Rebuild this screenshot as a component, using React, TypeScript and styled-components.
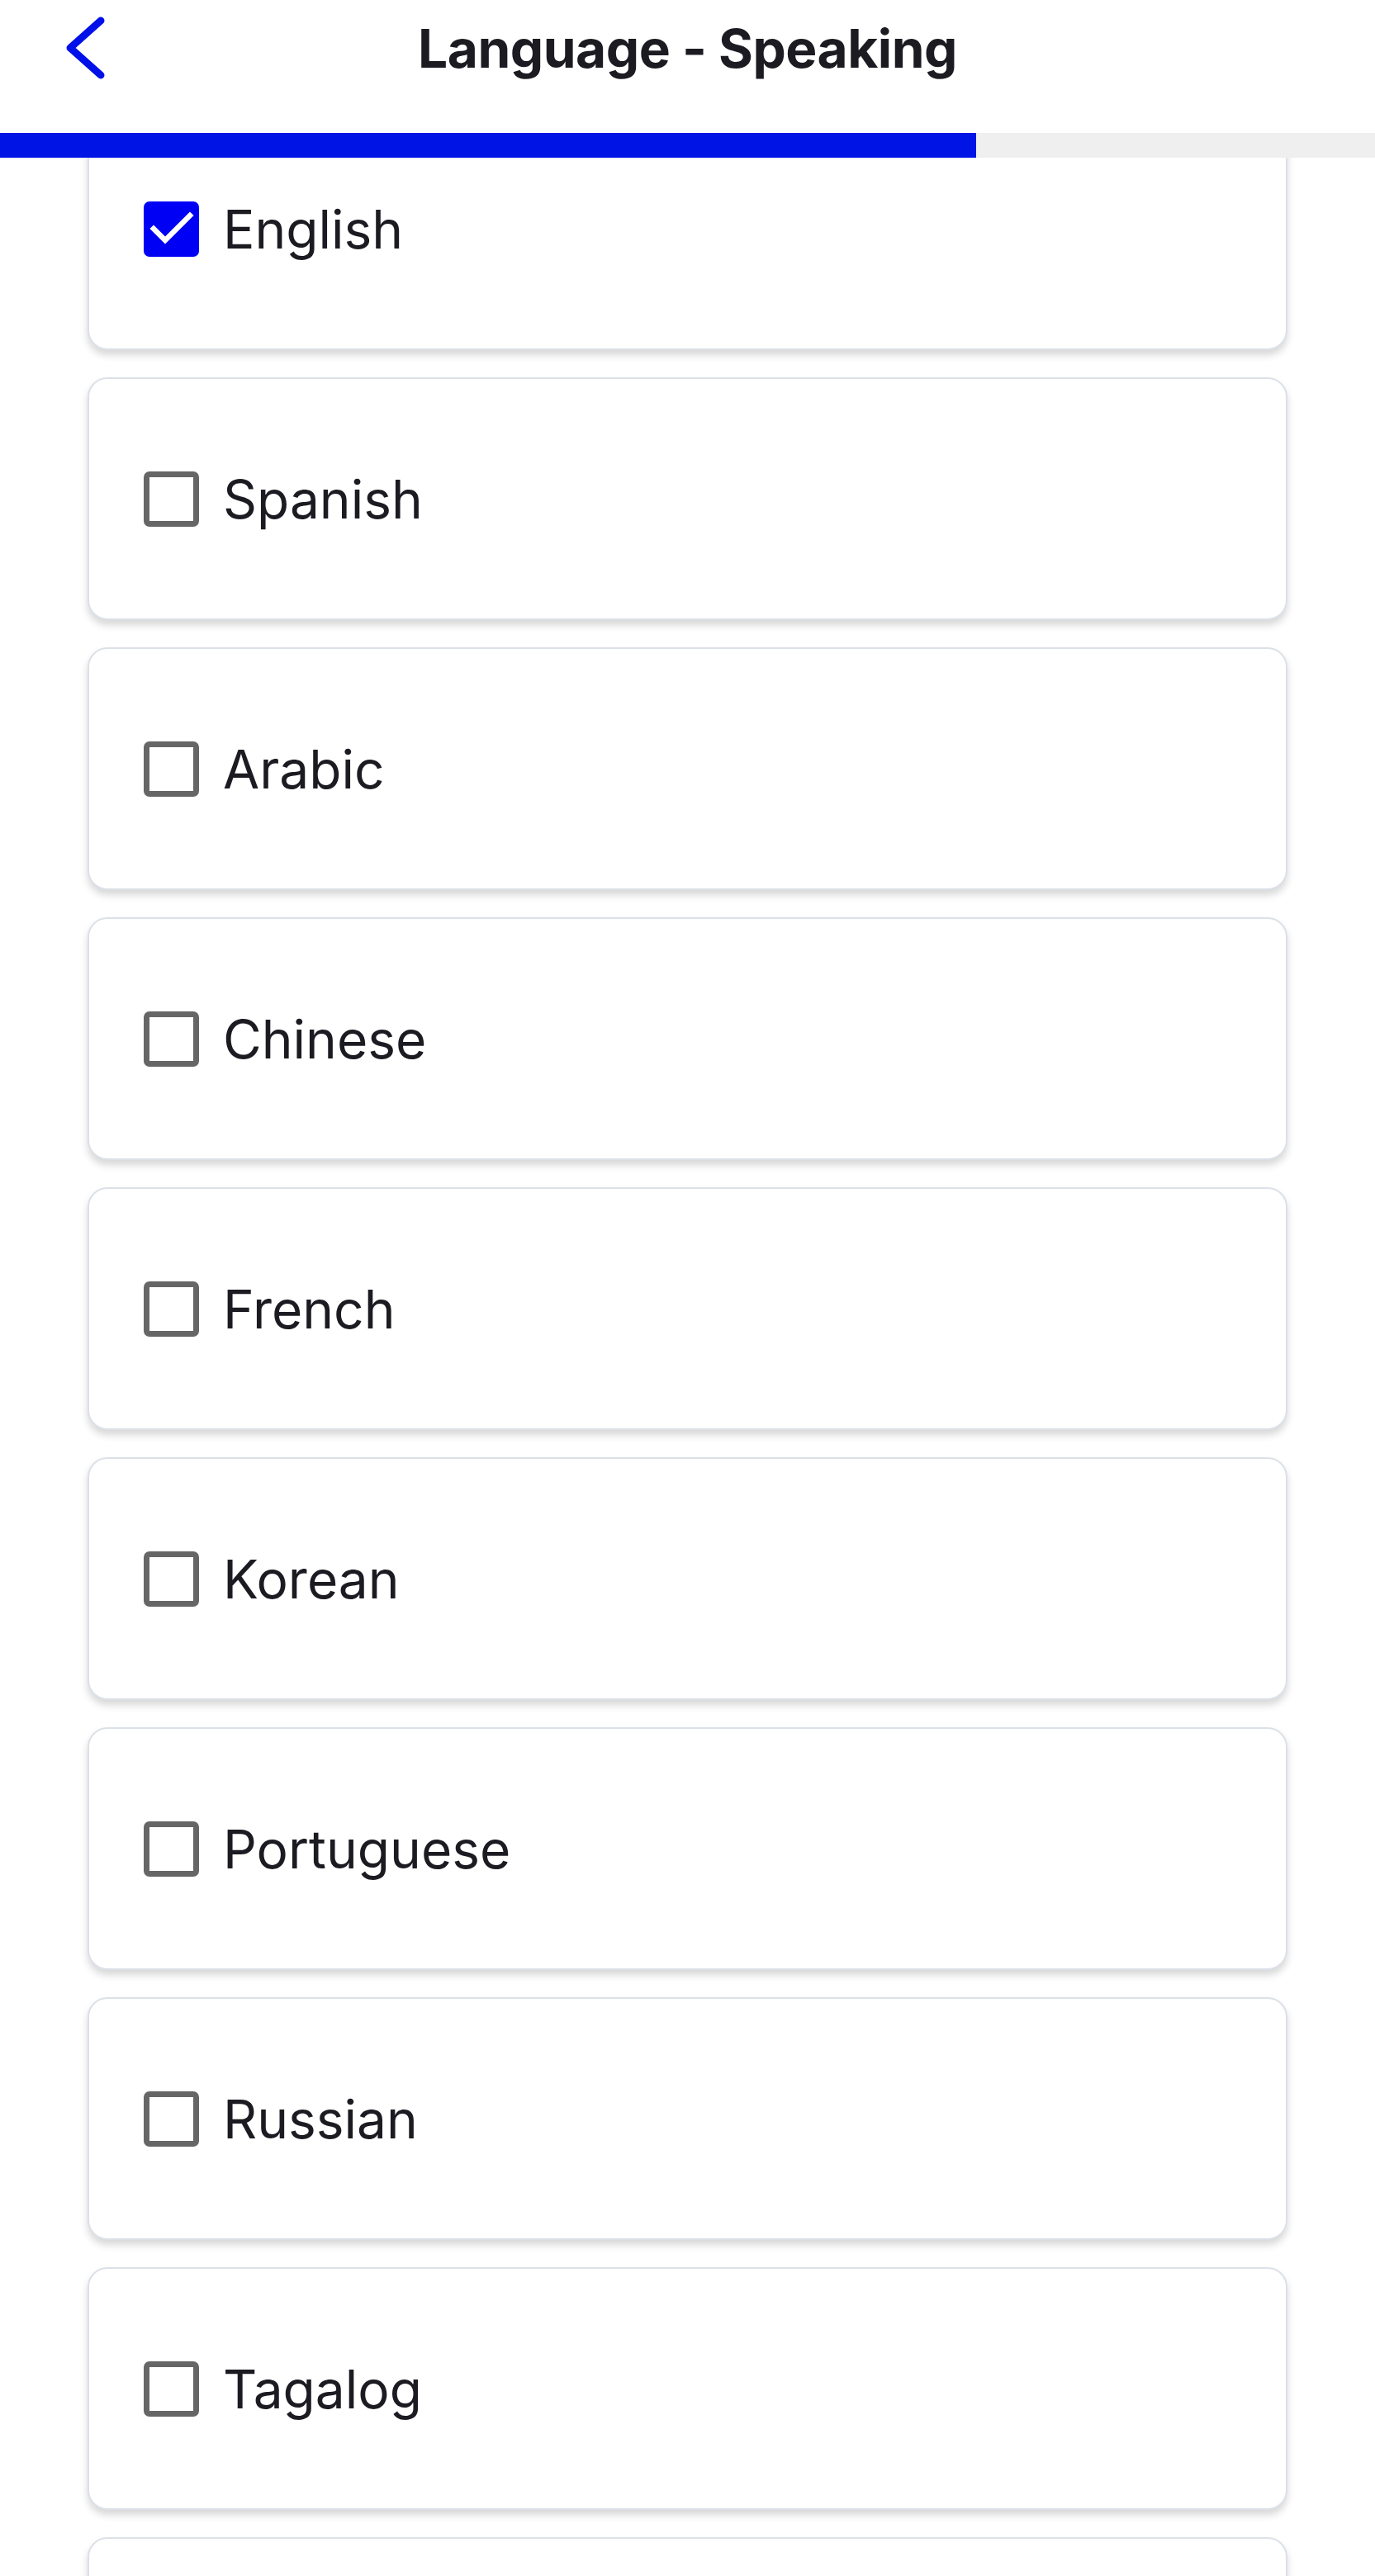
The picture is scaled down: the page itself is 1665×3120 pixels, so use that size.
import React from 'react';
import styled, { createGlobalStyle } from 'styled-components';

const GlobalStyle = createGlobalStyle`
  body {
    margin: 0;
    background: #ffffff;
    font-family: 'Inter', 'Noto Sans', sans-serif;
    color: #1c1b22;
  }
`;

const Page = styled.div`
  width: 1665px;
  background: #ffffff;
`;

const TopBar = styled.div`
  position: relative;
  z-index: 2;
  background: #ffffff;
`;

const Header = styled.header`
  height: 116px;
  display: flex;
  align-items: center;
  justify-content: center;
  position: relative;
  margin-bottom: 45px;
`;

const BackButton = styled.button`
  position: absolute;
  left: 76px;
  top: 14px;
  width: 56px;
  height: 88px;
  padding: 0;
  border: none;
  background: transparent;
  display: flex;
  align-items: center;
  justify-content: center;
  cursor: pointer;
`;

const Title = styled.h1`
  margin: 0;
  font-size: 64px;
  font-weight: 700;
  letter-spacing: -0.5px;
  color: #1c1b22;
`;

const Progress = styled.div`
  height: 30px;
  background: #efefef;
`;

const ProgressFill = styled.div<{ $percent: number }>`
  height: 100%;
  width: ${p => p.$percent}%;
  background: #0014e6;
`;

const List = styled.ul`
  list-style: none;
  margin: -61px 106px 0;
  padding: 0;
  display: flex;
  flex-direction: column;
  gap: 33px;
`;

const Card = styled.li`
  height: 294px;
  box-sizing: border-box;
  border: 2px solid #dce1e8;
  border-radius: 24px;
  background: #ffffff;
  box-shadow: 0 6px 10px rgba(0, 0, 0, 0.16);
  display: flex;
  align-items: center;
  gap: 29px;
  padding-left: 66px;
  cursor: pointer;
`;

const Box = styled.span<{ $checked: boolean }>`
  width: 67px;
  height: 67px;
  box-sizing: border-box;
  border-radius: 7px;
  flex-shrink: 0;
  display: flex;
  align-items: center;
  justify-content: center;
  background: ${p => (p.$checked ? '#0000f5' : '#ffffff')};
  border: ${p => (p.$checked ? 'none' : '7px solid #666666')};
`;

const Label = styled.span`
  font-size: 64px;
  font-weight: 400;
  color: #1c1b22;
`;

const languages = [
  'English',
  'Spanish',
  'Arabic',
  'Chinese',
  'French',
  'Korean',
  'Portuguese',
  'Russian',
  'Tagalog',
  'Vietnamese',
];

export default function App() {
  const [selected, setSelected] = React.useState<string[]>(['English']);

  const toggle = (lang: string) =>
    setSelected(s => (s.includes(lang) ? s.filter(l => l !== lang) : [...s, lang]));

  return (
    <Page>
      <GlobalStyle />
      <TopBar>
        <Header>
          <BackButton aria-label="Back">
            <svg width="56" height="88" viewBox="0 0 56 88" fill="none">
              <path
                d="M46 11 L9 44 L46 77"
                stroke="#0010e8"
                strokeWidth="9"
                strokeLinecap="round"
                strokeLinejoin="round"
              />
            </svg>
          </BackButton>
          <Title>Language - Speaking</Title>
        </Header>
        <Progress>
          <ProgressFill $percent={71} />
        </Progress>
      </TopBar>
      <List>
        {languages.map(lang => {
          const checked = selected.includes(lang);
          return (
            <Card key={lang} onClick={() => toggle(lang)}>
              <Box $checked={checked}>
                {checked && (
                  <svg width="67" height="67" viewBox="0 0 67 67" fill="none">
                    <path
                      d="M12 33 L26 47 L56 17"
                      stroke="#ffffff"
                      strokeWidth="6.5"
                      strokeLinecap="square"
                    />
                  </svg>
                )}
              </Box>
              <Label>{lang}</Label>
            </Card>
          );
        })}
      </List>
    </Page>
  );
}
